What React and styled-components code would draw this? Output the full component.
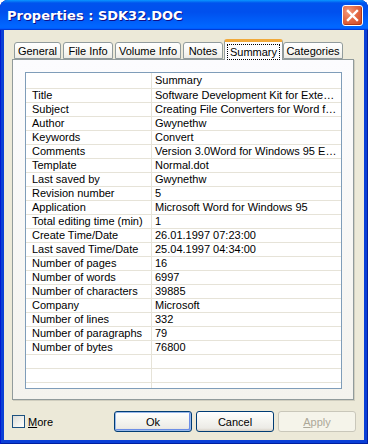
import React from 'react'
import styled, { createGlobalStyle } from 'styled-components'

const GlobalStyle = createGlobalStyle`
  html, body {
    margin: 0;
    padding: 0;
    background: #ffffff;
  }
  body {
    font-family: "Liberation Sans", Arial, sans-serif;
    font-size: 11px;
    color: #000;
  }
`

const summary = [
    ['Title', 'Software Development Kit for Exte…'],
    ['Subject', 'Creating File Converters for Word f…'],
    ['Author', 'Gwynethw'],
    ['Keywords', 'Convert'],
    ['Comments', 'Version 3.0Word for Windows 95 E…'],
    ['Template', 'Normal.dot'],
    ['Last saved by', 'Gwynethw'],
    ['Revision number', '5'],
    ['Application', 'Microsoft Word for Windows 95'],
    ['Total editing time (min)', '1'],
    ['Create Time/Date', '26.01.1997 07:23:00'],
    ['Last saved Time/Date', '25.04.1997 04:34:00'],
    ['Number of pages', '16'],
    ['Number of words', '6997'],
    ['Number of characters', '39885'],
    ['Company', 'Microsoft'],
    ['Number of lines', '332'],
    ['Number of paragraphs', '79'],
    ['Number of bytes', '76800'],
    ['', ''],
    ['', ''],
    ['', ''],
]

const tabs = [
    { label: 'General', width: 47 },
    { label: 'File Info', width: 50 },
    { label: 'Volume Info', width: 66 },
    { label: 'Notes', width: 40 },
    { label: 'Summary', width: 59, active: true },
    { label: 'Categories', width: 60 },
]

function App() {
    return (
        <>
            <GlobalStyle />
            <Window>
                <TitleBar>
                    <Title>Properties : SDK32.DOC</Title>
                    <CloseButton aria-label='Close'>
                        <svg width='13' height='13' viewBox='0 0 13 13'>
                            <path d='M2 2 L11 11 M11 2 L2 11' stroke='#fff' strokeWidth='2.4' strokeLinecap='square' />
                        </svg>
                    </CloseButton>
                </TitleBar>
                <Frame>
                    <TabStrip>
                        {tabs.map(tab => (
                            <Tab key={tab.label} $w={tab.width} $active={tab.active}>
                                {tab.active ? <Focus>{tab.label}</Focus> : tab.label}
                            </Tab>
                        ))}
                    </TabStrip>
                    <Panel>
                        <Grid>
                            <Row $header>
                                <NameCell />
                                <ValueCell>Summary</ValueCell>
                            </Row>
                            {summary.map(([name, value], i) => (
                                <Row key={i}>
                                    <NameCell>{name}</NameCell>
                                    <ValueCell>{value}</ValueCell>
                                </Row>
                            ))}
                        </Grid>
                    </Panel>
                    <BottomBar>
                        <CheckLabel>
                            <CheckBox />
                            <span><u>M</u>ore</span>
                        </CheckLabel>
                        <Buttons>
                            <Button $default>Ok</Button>
                            <Button>Cancel</Button>
                            <Button disabled><u>A</u>pply</Button>
                        </Buttons>
                    </BottomBar>
                </Frame>
            </Window>
        </>
    )
}

const Window = styled.div`
    width: 368px;
    height: 444px;
    display: flex;
    flex-direction: column;
    background: #0a3fd6;
    border-radius: 8px 8px 0 0;
    overflow: hidden;
    box-shadow: inset 1px 0 #0019cf, inset -1px 0 #001ea0, inset 0 -1px #001ea0;
`

const TitleBar = styled.div`
    height: 30px;
    flex: none;
    display: flex;
    align-items: center;
    padding: 0 5px 0 7px;
    box-sizing: border-box;
    background: linear-gradient(to bottom, #0997ff 0%, #0053ee 10%, #0050ee 40%, #0066ff 86%, #0066ff 92%, #005bff 95%, #003dd7 97%, #003dd7 100%);
`

const Title = styled.div`
    flex: 1;
    font-family: "DejaVu Sans", Verdana, sans-serif;
    font-weight: bold;
    font-size: 13px;
    color: #fff;
    text-shadow: 1px 1px #0f1089;
    padding-top: 1px;
`

const CloseButton = styled.button`
    width: 21px;
    height: 21px;
    padding: 0;
    margin-top: 1px;
    display: flex;
    align-items: center;
    justify-content: center;
    border: 1px solid #fff;
    border-radius: 3px;
    background: radial-gradient(circle at 30% 30%, #f49a7c 0%, #e46a45 45%, #cc4420 100%);
    box-shadow: inset -1px -1px #b33a17;
`

const Frame = styled.div`
    flex: 1;
    margin: 0 4px 4px;
    padding: 9px 8px 0;
    background: #ece9d8;
    display: flex;
    flex-direction: column;
`

const TabStrip = styled.div`
    height: 20px;
    display: flex;
    align-items: flex-end;
    gap: 2px;
    padding-left: 2px;
    position: relative;
    z-index: 1;
`

const Tab = styled.div`
    width: ${p => p.$w}px;
    height: ${p => (p.$active ? 21 : 17)}px;
    box-sizing: border-box;
    margin: ${p => (p.$active ? '0 -2px -1px -1px' : '0')};
    display: flex;
    align-items: center;
    justify-content: center;
    padding-top: ${p => (p.$active ? 2 : 1)}px;
    border: 1px solid #919b9c;
    border-bottom: ${p => (p.$active ? 'none' : '1px solid #919b9c')};
    border-top: ${p => (p.$active ? '3px solid #f1a93a' : '1px solid #919b9c')};
    border-radius: 3px 3px 0 0;
    background: ${p => (p.$active
        ? '#fcfcfe'
        : 'linear-gradient(to bottom, #ffffff 0%, #f7f7f3 60%, #ecebe5 100%)')};
    white-space: nowrap;
`

const Focus = styled.span`
    outline: 1px dotted #000;
    padding: 0 2px;
    line-height: 14px;
`

const Panel = styled.div`
    width: 342px;
    height: 341px;
    box-sizing: border-box;
    border: 1px solid #919b9c;
    background: linear-gradient(to bottom, #fcfcfe 0%, #f4f3ee 100%);
    box-shadow: 1px 1px 0 #d0cebf;
    padding: 12px 11px 10px 12px;
`

const Grid = styled.div`
    height: 100%;
    box-sizing: border-box;
    border: 1px solid #7f9db9;
    background: #fff;
    overflow: hidden;
`

const Row = styled.div`
    display: grid;
    grid-template-columns: 126px 1fr;
    height: ${p => (p.$header ? 16 : 14)}px;
    box-sizing: border-box;
    border-bottom: 1px solid #e6e3d8;
    line-height: ${p => (p.$header ? 15 : 13)}px;
`

const NameCell = styled.div`
    border-right: 1px solid #e6e3d8;
    padding-left: 6px;
    white-space: nowrap;
    overflow: hidden;
`

const ValueCell = styled.div`
    padding-left: 3px;
    white-space: nowrap;
    overflow: hidden;
`

const BottomBar = styled.div`
    display: flex;
    align-items: center;
    margin-top: 11px;
    height: 21px;
`

const CheckLabel = styled.label`
    display: flex;
    align-items: center;
    gap: 3px;
`

const CheckBox = styled.span`
    width: 13px;
    height: 13px;
    box-sizing: border-box;
    border: 1px solid #1c5180;
    background: linear-gradient(135deg, #dcdcd7 0%, #f2f2ee 60%, #ffffff 100%);
`

const Buttons = styled.div`
    margin-left: auto;
    display: flex;
    gap: 4px;
`

const Button = styled.button`
    width: 78px;
    height: 21px;
    padding: 0;
    font-family: "Liberation Sans", Arial, sans-serif;
    font-size: 11px;
    color: #000;
    border: 1px solid #003c74;
    border-radius: 3px;
    background: linear-gradient(to bottom, #ffffff 0%, #f6f6f2 40%, #ecebe6 85%, #d6d0c5 100%);
    box-shadow: ${p => (p.$default ? 'inset 0 0 0 1px #98b8ea, inset -1px -1px 0 1px #6c8ee6' : 'none')};

    &:disabled {
        color: #aca899;
        border-color: #c9c7ba;
        background: #f5f4ea;
    }
`

export default App
